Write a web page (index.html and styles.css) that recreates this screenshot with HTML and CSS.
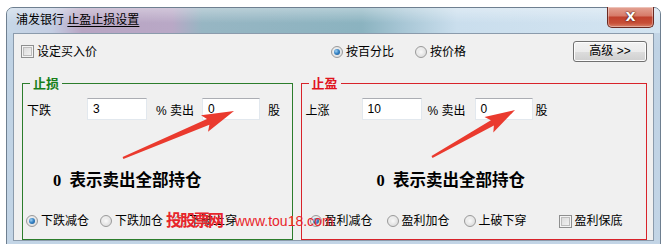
FILE: index.html
```html
<!DOCTYPE html>
<html lang="zh-CN">

<head>
  <meta charset="UTF-8">
  <title>止盈止损设置</title>
  <link rel="stylesheet" href="styles.css">
</head>

<body>
  <div class="window">
    <div class="titlebar">
      <span class="title">浦发银行 <u>止盈止损设置</u></span>
      <span class="close">X</span>
    </div>

    <div class="client">
      <div class="toprow">
        <label class="check buy"><span class="box"></span>设定买入价</label>
        <label class="radio on"><span class="dot"></span>按百分比</label>
        <label class="radio second"><span class="dot"></span>按价格</label>
        <span class="btn">高级 &gt;&gt;</span>
      </div>

      <div class="groups">
        <div class="group loss">
          <span class="legend">止损</span>
          <div class="fields">
            <span class="lbl">下跌</span>
            <span class="input">3</span>
            <span class="pct">% 卖出</span>
            <span class="input small">0</span>
            <span class="unit">股</span>
          </div>
          <div class="note">0&nbsp; 表示卖出全部持仓</div>
          <div class="opts">
            <label class="radio on"><span class="dot"></span>下跌减仓</label>
            <label class="radio"><span class="dot"></span>下跌加仓</label>
            <label class="radio"><span class="dot"></span>下破上穿</label>
          </div>
        </div>

        <div class="group profit">
          <span class="legend">止盈</span>
          <div class="fields">
            <span class="lbl">上涨</span>
            <span class="input">10</span>
            <span class="pct">% 卖出</span>
            <span class="input small">0</span>
            <span class="unit">股</span>
          </div>
          <div class="note">0&nbsp; 表示卖出全部持仓</div>
          <div class="opts">
            <label class="radio on"><span class="dot"></span>盈利减仓</label>
            <label class="radio"><span class="dot"></span>盈利加仓</label>
            <label class="radio"><span class="dot"></span>上破下穿</label>
            <label class="check floor"><span class="box"></span>盈利保底</label>
          </div>
        </div>
      </div>
    </div>
  </div>

  <!-- site watermark stamped over the screenshot -->
  <div class="watermark"><b>投股票网</b> <span>www.tou18.com</span></div>

  <!-- red annotation arrows -->
  <svg class="marks" width="669" height="244" viewBox="0 0 669 244">
    <polygon fill="#ea3a2e" points="122.6,157.1 207,119.1 201,115.2 234,111 208,131.8 209.4,124.7 123.4,158.9" />
    <polygon fill="#ea3a2e" points="431.5,156.1 490.9,120.2 484.5,117 515,110 493.3,132.6 493.9,125.4 432.5,157.9" />
  </svg>
</body>

</html>
```

FILE: styles.css
```css
* {
  box-sizing: border-box;
  margin: 0;
  padding: 0;
}

body {
  position: relative;
  width: 669px;
  height: 244px;
  overflow: hidden;
  background: #fff;
  font-family: 'Liberation Sans', 'Noto Sans CJK SC', sans-serif;
  font-size: 12px;
  color: #000;
}

.window {
  margin: 7px 0 0 6px;
  width: 655px;
  height: 250px;
  border: 1px solid #6e7f90;
  border-radius: 7px 7px 0 0;
  background: linear-gradient(to bottom, #c9dae9, #bfd2e4 40px, #c3d5e6);
}

.titlebar {
  display: flex;
  align-items: flex-start;
  height: 25px;
  padding-left: 9px;
  border-radius: 6px 6px 0 0;
  background:
    linear-gradient(to bottom, rgba(255, 255, 255, 0.35), rgba(255, 255, 255, 0) 60%),
    linear-gradient(to right, #c6d7e7 0, #c3cde2 45px, #b8a5c3 75px, #b9a8c6 165px, #97b6c3 195px, #8bb3c0 355px, #a7c6d5 395px, #cadeed 450px, #d3e4f1 100%);
}

.title {
  padding-top: 4px;
  line-height: 16px;
  color: #000;
}

.title u {
  text-decoration-thickness: 1px;
  text-underline-offset: 2px;
}

.close {
  margin: -1px 6px 0 auto;
  width: 47px;
  height: 21px;
  border: 1px solid #6a2a22;
  border-top: none;
  border-radius: 0 0 5px 5px;
  background: linear-gradient(to bottom, #e4a495 0, #d67a68 45%, #c0412d 50%, #c74e36 80%, #d8826a 100%);
  box-shadow: inset 0 0 0 1px rgba(255, 255, 255, 0.35);
  color: #fff;
  font-family: 'DejaVu Sans', sans-serif;
  font-weight: bold;
  font-size: 13px;
  line-height: 19px;
  text-align: center;
  text-shadow: 0 0 2px #4a1a12, 0 0 1px #4a1a12;
}

.client {
  margin: 0 6px;
  height: 208px;
  padding: 7px 6px 0 7px;
  border: 1px solid #8b9bac;
  background: #f0f0f0;
}

/* top row */
.toprow {
  display: flex;
  align-items: center;
  height: 21px;
}

.buy {
  width: 310px;
}

.toprow .second {
  margin-left: 21px;
}

.btn {
  margin-left: auto;
  width: 74px;
  height: 21px;
  border: 1px solid #707070;
  border-radius: 3px;
  background: linear-gradient(to bottom, #f2f2f2 0, #ebebeb 50%, #dddddd 51%, #cfcfcf 100%);
  box-shadow: inset 0 0 0 1px #fcfcfc;
  text-align: center;
  line-height: 19px;
}

/* check boxes and radio buttons */
.check,
.radio {
  display: flex;
  align-items: center;
  gap: 3px;
  line-height: 16px;
  white-space: nowrap;
}

.box {
  width: 13px;
  height: 13px;
  border: 1px solid #8e8f8f;
  background: linear-gradient(135deg, #d6d6d6, #f7f7f7);
  box-shadow: inset 0 0 0 1px #f4f4f4, inset 0 0 0 2px #bdbdbd;
}

.dot {
  position: relative;
  width: 12px;
  height: 12px;
  border: 1px solid #9a9a9a;
  border-radius: 50%;
  background: radial-gradient(circle at 40% 40%, #f6f6f6, #d8d8d8);
}

.dot::after {
  content: '';
  position: absolute;
  left: 2px;
  top: 2px;
  width: 6px;
  height: 6px;
  border-radius: 50%;
  background: radial-gradient(circle at 50% 50%, #fafafa, #e2e2e2);
}

.radio.on .dot::after {
  background: radial-gradient(circle at 35% 35%, #9fd2f5 0, #3b86c6 45%, #0f4f8c 100%);
}

/* group boxes */
.groups {
  display: flex;
  gap: 8px;
  margin: 21px 0 0 1px;
}

.group {
  position: relative;
  height: 157px;
  padding: 14px 0 0 4px;
  border: 1px solid;
  display: flex;
  flex-direction: column;
}

.loss {
  width: 271px;
  border-color: #2c7d2c;
}

.profit {
  width: 347px;
  border-color: #d8232a;
}

.legend {
  position: absolute;
  top: -9px;
  left: 7px;
  padding: 0 3px;
  background: #f0f0f0;
  font-family: 'Noto Sans CJK SC', sans-serif;
  font-size: 13px;
  font-weight: bold;
  line-height: 16px;
}

.loss .legend {
  color: #18801a;
}

.profit .legend {
  color: #e0141e;
}

.fields {
  display: flex;
  align-items: center;
  height: 22px;
  white-space: nowrap;
}

.lbl {
  width: 60px;
}

.profit .lbl {
  width: 56px;
}

.input {
  width: 60px;
  height: 22px;
  padding-left: 5px;
  border: 1px solid #e2e8ee;
  border-top-color: #abadb3;
  background: #fff;
  line-height: 20px;
}

.input.small {
  width: 58px;
}

.pct {
  width: 37px;
  margin-left: 9px;
}

.pct + .input {
  margin-left: 9px;
}

.unit {
  margin-left: 8px;
}

.profit .pct {
  margin-left: 6px;
}

.profit .pct + .input {
  margin-left: 10px;
}

.profit .unit {
  margin-left: 3px;
}

.note {
  margin-top: 51px;
  padding-left: 26px;
  font-family: 'Liberation Serif', 'Noto Sans CJK SC', serif;
  font-size: 16.5px;
  font-weight: bold;
  line-height: 20px;
  white-space: nowrap;
}

.profit .note {
  padding-left: 71px;
}

.opts {
  display: flex;
  gap: 11px;
  margin: 22px 0 0 -1px;
}

.profit .opts {
  gap: 14px;
  margin-left: 4px;
}

.profit .floor {
  margin-left: 18px;
}

/* overlays */
.watermark {
  position: absolute;
  left: 166px;
  top: 209px;
  color: #e8252b;
  white-space: nowrap;
  font-family: 'Noto Sans CJK SC', sans-serif;
}

.watermark b {
  font-size: 16px;
  line-height: 20px;
  letter-spacing: -2px;
}

.watermark span {
  font-family: 'Liberation Sans', sans-serif;
  font-size: 14px;
  margin-left: 10px;
}

.marks {
  position: absolute;
  left: 0;
  top: 0;
  pointer-events: none;
}
```
